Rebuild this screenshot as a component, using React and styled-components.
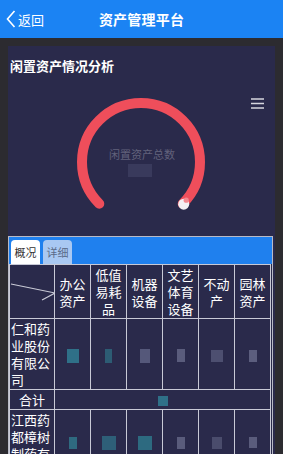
import React from "react";
import styled, { createGlobalStyle } from "styled-components";

const GlobalStyle = createGlobalStyle`
  html, body {
    margin: 0;
    padding: 0;
    background: #2c2b30;
    font-family: "Noto Sans CJK SC", "Noto Sans", sans-serif;
    overflow: hidden;
  }
`;

const rows = [
  {
    name: ["仁和药", "业股份", "有限公", "司"],
    cells: [
      { w: 12, h: 14, c: "#2f7088" },
      { w: 7, h: 14, c: "#2d5c74" },
      { w: 10, h: 14, c: "#55587a" },
      { w: 8, h: 13, c: "#5a5c7c" },
      { w: 12, h: 12, c: "#4d4f70" },
      { w: 8, h: 12, c: "#5c5e7e" },
    ],
  },
];

const lastRow = {
  name: ["江西药", "都樟树", "制药有"],
  cells: [
    { w: 8, h: 12, c: "#2f6a80" },
    { w: 14, h: 14, c: "#2e5f78" },
    { w: 14, h: 14, c: "#2d6a80" },
    { w: 8, h: 12, c: "#5a5c7c" },
    { w: 10, h: 12, c: "#4a4c6c" },
    { w: 8, h: 11, c: "#5a5c7c" },
  ],
};

const headers = [
  ["办公", "资产"],
  ["低值", "易耗", "品"],
  ["机器", "设备"],
  ["文艺", "体育", "设备"],
  ["不动", "产"],
  ["园林", "资产"],
];

const App = () => {
  const cx = 133;
  const cy = 76;
  const r = 59;
  const d = r * Math.SQRT1_2;

  return (
    <>
      <GlobalStyle />
      <Header>
        <Back>
          <svg width="10" height="18" viewBox="0 0 10 18">
            <path d="M8.5 1 L1.5 9 L8.5 17" fill="none" stroke="#fff" strokeWidth="1.6" />
          </svg>
          <span>返回</span>
        </Back>
        <Title>资产管理平台</Title>
        <span />
      </Header>
      <Page>
        <Panel>
          <PanelTitle>闲置资产情况分析</PanelTitle>
          <Chart>
            <svg width="267" height="150" viewBox="0 0 267 150">
              <path
                d={`M ${cx - d} ${cy + d} A ${r} ${r} 0 1 1 ${cx + d} ${cy + d}`}
                fill="none"
                stroke="#ef4e5b"
                strokeWidth="10"
                strokeLinecap="round"
              />
              <circle cx={cx + d + 1} cy={cy + d + 0.5} r="5.5" fill="#f4f0f4" />
              <circle cx={cx + d + 3.5} cy={cy + d - 3.5} r="2.6" fill="#f28a92" />
              <text x={cx + 1} y={cy - 3} textAnchor="middle" fontSize="11" fill="#62627c">
                闲置资产总数
              </text>
              <rect x={cx - 13} y={cy + 2} width="24" height="13" fill="#393a5c" />
            </svg>
            <Menu>
              <svg width="13" height="11" viewBox="0 0 13 11">
                <path d="M0 1 H13 M0 5.5 H13 M0 10 H13" stroke="#d6d6de" strokeWidth="1.4" />
              </svg>
            </Menu>
          </Chart>
          <TabBox>
            <TabBar>
              <Tab $active>概况</Tab>
              <Tab>详细</Tab>
            </TabBar>
            <Table>
              <colgroup>
                <col style={{ width: 45 }} />
                {headers.map((_, i) => (
                  <col key={i} style={{ width: 36 }} />
                ))}
              </colgroup>
              <thead>
                <tr>
                  <Corner>
                    <svg width="45" height="53" viewBox="0 0 45 53">
                      <path d="M45 28 L1 19 M45 28 L32 35" stroke="#c9cad6" strokeWidth="1.2" />
                    </svg>
                  </Corner>
                  {headers.map((h, i) => (
                    <HeadCell key={i}>
                      {h.map((l, j) => (
                        <div key={j}>{l}</div>
                      ))}
                    </HeadCell>
                  ))}
                </tr>
              </thead>
              <tbody>
                {rows.map((row, i) => (
                  <tr key={i}>
                    <NameCell>
                      {row.name.map((l, j) => (
                        <div key={j}>{l}</div>
                      ))}
                    </NameCell>
                    {row.cells.map((c, j) => (
                      <ValueCell key={j}>
                        <Blot $w={c.w} $h={c.h} $c={c.c} />
                      </ValueCell>
                    ))}
                  </tr>
                ))}
                <tr>
                  <TotalCell>合计</TotalCell>
                  <ValueCell colSpan={6}>
                    <Blot $w={10} $h={10} $c="#2f7088" />
                  </ValueCell>
                </tr>
                <tr>
                  <NameCell>
                    {lastRow.name.map((l, j) => (
                      <div key={j}>{l}</div>
                    ))}
                  </NameCell>
                  {lastRow.cells.map((c, j) => (
                    <ValueCell key={j} $shift={10}>
                      <Blot $w={c.w} $h={c.h} $c={c.c} />
                    </ValueCell>
                  ))}
                </tr>
              </tbody>
            </Table>
          </TabBox>
        </Panel>
      </Page>
    </>
  );
};

export default App;

const Header = styled.div`
  height: 38px;
  background: #1b83f3;
  display: grid;
  grid-template-columns: 1fr auto 1fr;
  align-items: center;
  color: #fff;
`;

const Back = styled.div`
  display: flex;
  align-items: center;
  gap: 2px;
  padding-left: 6px;
  font-size: 13px;
`;

const Title = styled.div`
  font-size: 14px;
  font-weight: bold;
  letter-spacing: 0.2px;
`;

const Page = styled.div`
  padding: 8px 8px 0 8px;
`;

const Panel = styled.div`
  background: #2a2a4b;
  height: 420px;
`;

const PanelTitle = styled.div`
  height: 40px;
  box-sizing: border-box;
  padding: 11px 0 0 2px;
  font-size: 13px;
  line-height: 18px;
  font-weight: bold;
  color: #fff;
`;

const Chart = styled.div`
  position: relative;
  height: 150px;
  svg {
    display: block;
  }
`;

const Menu = styled.div`
  position: absolute;
  left: 243px;
  top: 12px;
`;

const TabBox = styled.div`
  margin-right: 2px;
  border: 1px solid #b8bac6;
  border-bottom: none;
`;

const TabBar = styled.div`
  height: 27px;
  background: #1f80ee;
  display: flex;
  align-items: flex-end;
  gap: 3px;
  padding-left: 2px;
`;

const Tab = styled.div`
  width: 29px;
  height: 24px;
  border-radius: 4px 4px 0 0;
  display: flex;
  align-items: center;
  justify-content: center;
  font-size: 11px;
  color: ${(p) => (p.$active ? "#333" : "#5a6b88")};
  background: ${(p) => (p.$active ? "#ffffff" : "#a9c8f2")};
`;

const Table = styled.table`
  width: 260px;
  margin-left: 0;
  table-layout: fixed;
  border-collapse: collapse;
  color: #fff;
  font-size: 13px;
  line-height: 17px;

  td, th {
    border: 1.5px solid #c8c9d6;
    padding: 1px 0;
    font-weight: normal;
  }
`;

const Corner = styled.th`
  position: relative;
  height: 51px;
  svg {
    position: absolute;
    left: 0;
    top: 0;
  }
`;

const HeadCell = styled.th`
  text-align: center;
  vertical-align: middle;
`;

const NameCell = styled.td`
  text-align: left;
  padding-left: 1px !important;
  vertical-align: top;
`;

const TotalCell = styled.td`
  text-align: center;
`;

const ValueCell = styled.td`
  text-align: center;
  vertical-align: middle;
  padding-top: ${(p) => (p.$shift ? `${p.$shift}px` : "1px")} !important;
`;

const Blot = styled.span`
  display: inline-block;
  width: ${(p) => p.$w}px;
  height: ${(p) => p.$h}px;
  background: ${(p) => p.$c};
  vertical-align: middle;
  filter: blur(0.6px);
`;
